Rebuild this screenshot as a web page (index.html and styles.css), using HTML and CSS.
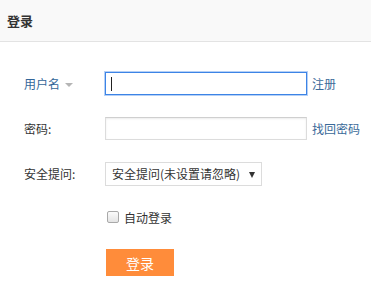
FILE: index.html
```
<!DOCTYPE html>
<html lang="zh-CN">
<head>
<meta charset="utf-8">
<link rel="stylesheet" href="styles.css">
</head>
<body>
<div class="header">登录</div>
<form class="form">
  <div class="row">
    <div class="label label-user">用户名<span class="tri"></span></div>
    <span class="field"><input class="input input-focus" type="text"><span class="caret"></span></span>
    <a class="link">注册</a>
  </div>
  <div class="row">
    <div class="label">密码:</div>
    <span class="field"><input class="input" type="password"></span>
    <a class="link">找回密码</a>
  </div>
  <div class="row">
    <div class="label">安全提问:</div>
    <span class="field select-wrap"><select class="select"><option>安全提问(未设置请忽略)</option></select><span class="arrow"></span></span>
  </div>
  <div class="row row-check">
    <div class="label"></div>
    <span class="check"></span><span class="check-text">自动登录</span>
  </div>
  <div class="row-btn">
    <div class="label"></div>
    <button type="button" class="btn">登录</button>
  </div>
</form>
</body>
</html>
```
FILE: styles.css
```
* { box-sizing: border-box; }
body {
  margin: 0;
  font-family: "Noto Sans CJK SC", "Liberation Sans", sans-serif;
  font-size: 12px;
  color: #333;
  background: #fff;
}
.header {
  height: 42px;
  line-height: 41px;
  background: #f9f9f9;
  border-bottom: 1px solid #e3e3e3;
  padding-left: 7px;
  font-size: 13px;
  font-weight: bold;
  color: #333;
}
.form {
  padding-top: 19px;
}
.row {
  display: flex;
  align-items: center;
  height: 45px;
}
.row-check { height: 42px; }
.label {
  width: 105px;
  padding-left: 24px;
  flex: none;
  display: flex;
  align-items: center;
}
.label-user { color: #336699; }
.tri {
  display: inline-block;
  margin-left: 5px;
  margin-top: 2px;
  border-left: 4px solid transparent;
  border-right: 4px solid transparent;
  border-top: 4px solid #b5b5b5;
}
.field {
  position: relative;
  display: inline-block;
}
.input {
  display: block;
  width: 202px;
  height: 23px;
  border: 1px solid #dcdcdc;
  border-top-color: #cfcfcf;
  box-shadow: inset 0 1px 2px rgba(0,0,0,0.08);
  background: #fff;
  outline: none;
  padding: 0 6px;
  margin: 0;
  font: inherit;
}
.input-focus {
  border: 1px solid #3d84e6;
  box-shadow: 0 0 0 1px rgba(90,150,235,0.45);
}
.caret {
  position: absolute;
  left: 6px;
  top: 5px;
  width: 1px;
  height: 14px;
  background: #222;
}
.link {
  margin-left: 5px;
  color: #3a6a99;
  text-decoration: none;
}
.select {
  -webkit-appearance: none;
  appearance: none;
  display: block;
  width: 157px;
  height: 24px;
  border: 1px solid #dcdcdc;
  background: #fff;
  font: inherit;
  color: #333;
  padding: 0 0 0 6px;
  margin: 0;
  outline: none;
  border-radius: 0;
}
.arrow {
  position: absolute;
  right: 7px;
  top: 10px;
  width: 0;
  height: 0;
  border-left: 3px solid transparent;
  border-right: 3px solid transparent;
  border-top: 6px solid #333;
  pointer-events: none;
}
.check {
  display: inline-block;
  width: 12px;
  height: 12px;
  margin-left: 2px;
  border: 1px solid #a9a9a9;
  border-radius: 2px;
  background: linear-gradient(#fbfbfb, #e4e4e4);
}
.check-text {
  margin-left: 5px;
}
.row-btn {
  display: flex;
  margin-top: 11px;
}
.btn {
  width: 68px;
  height: 27px;
  margin-left: 1px;
  border: none;
  background: #ff8c3a;
  color: #fff;
  font: inherit;
  font-size: 14px;
  padding: 0;
}
```
